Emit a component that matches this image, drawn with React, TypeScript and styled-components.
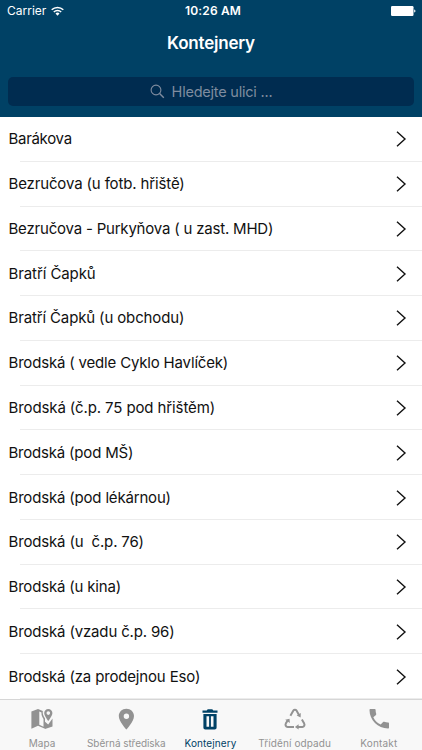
import React from "react";
import styled, { createGlobalStyle } from "styled-components";

const GlobalStyle = createGlobalStyle`
  * { box-sizing: border-box; }
  html, body { margin: 0; padding: 0; background: #fff; }
  body { font-family: Inter, "Liberation Sans", sans-serif; overflow: hidden; }
`;

const Screen = styled.div`
  width: 422px;
  height: 750px;
  display: flex;
  flex-direction: column;
  background: #fff;
`;

const Header = styled.header`
  height: 117px;
  flex: none;
  background: #004165;
  color: #fff;
`;

const StatusBar = styled.div`
  height: 22px;
  padding: 0 6px 0 7px;
  display: grid;
  grid-template-columns: 1fr auto 1fr;
  align-items: center;
  font-size: 12px;
  line-height: 22px;
`;

const Carrier = styled.div`
  display: flex;
  align-items: center;
  gap: 5px;
`;

const Clock = styled.div`
  font-weight: 600;
  padding-left: 3px;
  letter-spacing: 0.15px;
`;

const BatterySlot = styled.div`
  display: flex;
  justify-content: flex-end;
`;

const Title = styled.h1`
  margin: 0;
  height: 43px;
  line-height: 43px;
  text-align: center;
  font-size: 17px;
  font-weight: 600;
  letter-spacing: -0.2px;
`;

const SearchField = styled.div`
  height: 29px;
  margin: 12px 8px 0;
  border-radius: 5px;
  background: #002c50;
  color: #7f8c9f;
  display: flex;
  align-items: center;
  justify-content: center;
  gap: 7px;
  font-size: 14.5px;
  letter-spacing: -0.22px;
`;

const List = styled.ul`
  list-style: none;
  margin: 0;
  padding: 0;
  height: 582px;
  flex: none;
  display: grid;
  grid-template-rows: repeat(13, 1fr);
`;

const Row = styled.li`
  display: flex;
  align-items: center;
  justify-content: space-between;
  padding: 0 15px 0 8.5px;
  background: linear-gradient(#ececec, #ececec) 20px 100% / 100% 1px no-repeat;
`;

const Street = styled.span<{ $tracking: number }>`
  font-size: 15px;
  line-height: 20px;
  white-space: pre;
  color: #111;
  letter-spacing: ${(p) => p.$tracking}px;
`;

const TabBar = styled.nav`
  height: 51px;
  flex: none;
  border-top: 1px solid #d6d6d6;
  background: #f8f8f8;
  display: grid;
  grid-template-columns: repeat(5, 84.2px);
`;

const Tab = styled.div<{ $active?: boolean }>`
  display: flex;
  flex-direction: column;
  align-items: center;
  padding-top: 7px;
  color: ${(p) => (p.$active ? "#004165" : "#929292")};
  svg { display: block; flex: none; }
`;

const TabLabel = styled.span<{ $tracking: number }>`
  margin-top: 6px;
  font-size: 10px;
  line-height: 13px;
  white-space: nowrap;
  letter-spacing: ${(p) => p.$tracking}px;
`;

const WifiIcon = () => (
  <svg width="13" height="10" viewBox="0 0 13 10" fill="none" stroke="#fff" strokeWidth="1.5">
    <path d="M.7 3.8a8.2 8.2 0 0 1 11.6 0" />
    <path d="M2.8 6a5.2 5.2 0 0 1 7.4 0" />
    <path d="M6.5 9.7 4.5 7.6a2.8 2.8 0 0 1 4 0Z" fill="#fff" stroke="none" />
  </svg>
);

const BatteryIcon = () => (
  <svg width="25" height="10" viewBox="0 0 25 10" fill="#fff">
    <rect width="22.5" height="10" rx="1.2" />
    <path d="M23.2 3.4c1.7.4 1.7 2.8 0 3.2Z" />
  </svg>
);

const SearchIcon = () => (
  <svg width="15" height="15" viewBox="0 0 15 15" fill="none" stroke="currentColor" strokeWidth="1.1">
    <circle cx="6" cy="6" r="4.9" />
    <path d="m9.6 9.6 4.2 4.2" strokeWidth="1.4" />
  </svg>
);

const Chevron = () => (
  <svg width="11" height="16" viewBox="0 0 11 16" fill="none" stroke="#111" strokeWidth="1.4">
    <path d="M1 .8 9 8l-8 7.2" />
  </svg>
);

const MapIcon = () => (
  <svg width="24" height="24" viewBox="0 0 24 24" fill="currentColor">
    <path d="M1.4 4.4 8 2v16.7l-6.6 3Z" />
    <path fillRule="evenodd" d="M8 2l4.8 2.1c-.3 2.8.4 5 2.2 7.3v10.4L8 18.7Zm1.3 2.6v13.1l4.2 2V12C11.9 9.7 11.3 8 11.5 5.6Z" />
    <path d="M15 14.7l3.2 2.7 4.3-5.8v7.8L15 22Z" />
    <path fillRule="evenodd" d="M18.3 2c-2.3 0-4.1 1.7-4.1 4 0 2.8 4.1 8 4.1 8s4.1-5.2 4.1-8c0-2.3-1.8-4-4.1-4Zm0 2.3a1.8 1.8 0 1 1 0 3.6 1.8 1.8 0 0 1 0-3.6Z" />
  </svg>
);

const PinIcon = () => (
  <svg width="24" height="24" viewBox="0 0 24 24" fill="currentColor">
    <path fillRule="evenodd" d="M12.4 1.7c-4.3 0-7.6 3.2-7.6 7.2 0 5.5 7.6 13.5 7.6 13.5S20 14.4 20 8.9c0-4-3.3-7.2-7.6-7.2Zm0 4.8a2.7 2.7 0 1 1 0 5.4 2.7 2.7 0 0 1 0-5.4Z" />
  </svg>
);

const BinIcon = () => (
  <svg width="24" height="24" viewBox="0 0 24 24" fill="currentColor">
    <path d="M4.5 3.6h4.2l1-1.3h4.6l1 1.3h4.2v2.2h-15Z" />
    <path fillRule="evenodd" d="M5.4 7.1h13.2v13.5c0 1.3-.7 2-2 2H7.4c-1.3 0-2-.7-2-2Zm3.1 2.2v10.4h2.6V9.3Zm4.4 0v10.4h2.6V9.3Z" />
  </svg>
);

const RecycleIcon = () => (
  <svg width="24" height="24" viewBox="0 0 24 24" fill="none" stroke="currentColor" strokeWidth="2">
    <path d="m7.4 8.8 3-5.2c.7-1.2 2.4-1.2 3.1 0l2.6 4.6" />
    <path d="m18.9 12.6 2.3 4c.8 1.5-.1 3.3-1.8 3.3h-4.8" />
    <path d="M11 19.9H4.6c-1.7 0-2.6-1.8-1.8-3.3l1.8-3.1" />
    <g fill="currentColor" stroke="none">
      <path d="m17.8 6.1-.2 4.4-3.9-1.9Z" />
      <path d="m15.6 17.3-3.7 2.6 3.7 2.7Z" />
      <path d="m2.2 12.7 4.3-1 .4 4.2Z" />
    </g>
  </svg>
);

const PhoneIcon = () => (
  <svg width="24" height="24" viewBox="0 0 24 24" fill="currentColor">
    <path d="M6.3 10.2a15.5 15.5 0 0 0 7.4 7.4l2.4-2.5c.3-.3.7-.4 1.1-.3 1.3.5 2.5.7 3.8.7.6 0 1 .4 1 1v4c0 .6-.4 1-1 1C10.9 21.5 2.5 13 2.5 3c0-.6.4-1 1-1h4.1c.6 0 1 .4 1 1 0 1.4.2 2.6.6 3.8.2.4.1.8-.2 1.1Z" />
  </svg>
);

const streets: [string, number][] = [
  ["Barákova", -0.3],
  ["Bezručova (u fotb. hřiště)", -0.14],
  ["Bezručova - Purkyňova ( u zast. MHD)", -0.2],
  ["Bratří Čapků", -0.09],
  ["Bratří Čapků (u obchodu)", -0.14],
  ["Brodská ( vedle Cyklo Havlíček)", -0.18],
  ["Brodská (č.p. 75 pod hřištěm)", -0.11],
  ["Brodská (pod MŠ)", -0.2],
  ["Brodská (pod lékárnou)", -0.18],
  ["Brodská (u  č.p. 76)", -0.16],
  ["Brodská (u kina)", -0.18],
  ["Brodská (vzadu č.p. 96)", -0.16],
  ["Brodská (za prodejnou Eso)", -0.16],
];

const tabs = [
  { label: "Mapa", Icon: MapIcon, tracking: 0.1 },
  { label: "Sběrná střediska", Icon: PinIcon, tracking: -0.06 },
  { label: "Kontejnery", Icon: BinIcon, tracking: 0.1, active: true },
  { label: "Třídění odpadu", Icon: RecycleIcon, tracking: 0.1 },
  { label: "Kontakt", Icon: PhoneIcon, tracking: 0.15 },
];

export default function App() {
  return (
    <Screen>
      <GlobalStyle />
      <Header>
        <StatusBar>
          <Carrier>Carrier <WifiIcon /></Carrier>
          <Clock>10:26 AM</Clock>
          <BatterySlot><BatteryIcon /></BatterySlot>
        </StatusBar>
        <Title>Kontejnery</Title>
        <SearchField><SearchIcon />Hledejte ulici ...</SearchField>
      </Header>
      <List>
        {streets.map(([name, tracking]) => (
          <Row key={name}>
            <Street $tracking={tracking}>{name}</Street>
            <Chevron />
          </Row>
        ))}
      </List>
      <TabBar>
        {tabs.map(({ label, Icon, tracking, active }) => (
          <Tab key={label} $active={active}>
            <Icon />
            <TabLabel $tracking={tracking}>{label}</TabLabel>
          </Tab>
        ))}
      </TabBar>
    </Screen>
  );
}
